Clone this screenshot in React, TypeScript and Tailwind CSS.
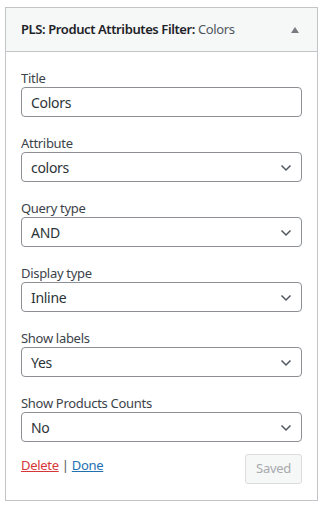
import { useState } from "react";

const fields = [
  { label: "Attribute", value: "colors" },
  { label: "Query type", value: "AND" },
  { label: "Display type", value: "Inline" },
  { label: "Show labels", value: "Yes" },
  { label: "Show Products Counts", value: "No" },
];

const Chevron = () => (
  <svg width="12" height="8" viewBox="0 0 12 8" className="absolute right-[9px] top-[11px]">
    <path d="M1.5 1.5 L6 6 L10.5 1.5" fill="none" stroke="#50575e" strokeWidth="1.5" />
  </svg>
);

const App = () => {
  const [title, setTitle] = useState("Colors");

  return (
    <div className="pl-[5px] pt-[7px] font-['Noto_Sans',sans-serif] text-[#3c434a] tracking-[-0.3px]">
      <div className="w-[313px] h-[494px] border border-[#c3c4c7] bg-white">
        <div className="h-[44px] bg-[#f6f7f7] border-b border-[#c3c4c7] pl-[15px] pr-[18px] flex items-center justify-between">
          <h3 className="text-[13px] text-[#1d2327] tracking-[-0.4px]">
            <span className="font-semibold">PLS: Product Attributes Filter:</span>{" "}
            <span className="text-[#50575e]">Colors</span>
          </h3>
          <div className="w-0 h-0 border-l-[4px] border-r-[4px] border-b-[6px] border-l-transparent border-r-transparent border-b-[#787c82]" />
        </div>

        <div className="px-[15px] pt-[16px]">
          <div className="flex flex-col gap-[16px]">
            <div>
              <label className="block text-[13px] leading-[18px] pt-[1px]">Title</label>
              <input
                value={title}
                onChange={(e) => setTitle(e.target.value)}
                className="w-full h-[30px] px-[9px] text-[14px] text-[#2c3338] border border-[#8c8f94] rounded-[4px] outline-none tracking-[-0.3px]"
              />
            </div>

            {fields.map((f) => (
              <div key={f.label}>
                <label className="block text-[13px] leading-[18px] pt-[1px]">{f.label}</label>
                <div className="relative h-[30px] border border-[#8c8f94] rounded-[4px] flex items-center px-[9px] text-[14px] text-[#2c3338]">
                  {f.value}
                  <Chevron />
                </div>
              </div>
            ))}
          </div>

          <div className="flex items-start justify-between mt-[12px]">
            <div className="text-[13px] leading-[18px] pt-[2px]">
              <a href="#" className="text-[#d63638] underline">Delete</a>
              <span className="text-[#50575e]"> | </span>
              <a href="#" className="text-[#2271b1] underline">Done</a>
            </div>
            <button
              disabled
              className="h-[30px] w-[57px] text-[13px] text-[#a7aaad] bg-[#f6f7f7] border border-[#dcdcde] rounded-[3px]"
            >
              Saved
            </button>
          </div>
        </div>
      </div>
    </div>
  );
};

export default App;
